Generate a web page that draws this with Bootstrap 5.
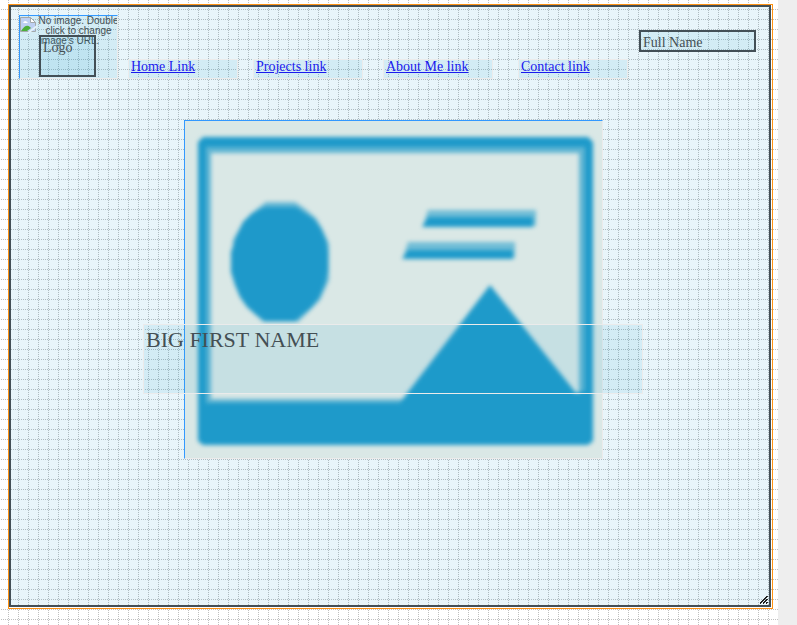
<!DOCTYPE html>
<html lang="en">
<head>
<meta charset="utf-8">
<meta name="viewport" content="width=device-width, initial-scale=1">
<title>Wireframe editor</title>
<link href="https://cdn.jsdelivr.net/npm/bootstrap@5.3.0/dist/css/bootstrap.min.css" rel="stylesheet">
<style>
body{background:#eee;font-family:"Liberation Serif",serif;font-size:14px;line-height:16px;color:#444f54}
.workspace{width:778px;height:625px;background:#fff}
/* free-form canvas: widgets carry their own coordinates */
.page-frame{left:8px;top:4px;width:765px;height:605px;border:1px solid #ff9212;padding:0 1px 1px 0}
.page-inner{border:2px solid #434f56;background:rgba(30,154,202,.1);background-clip:padding-box}
.grid-lines{pointer-events:none}
.widget{position:absolute;background:rgba(30,154,202,.1);background-clip:padding-box;border:1px solid #ebebeb;padding:0 2px;white-space:nowrap}
.widget a{color:#1a1aee;text-decoration:underline}
.nav-item-box{top:59px;height:20px;width:110px;line-height:14px}
.nav-home{left:128px}
.nav-projects{left:253px}
.nav-about{left:383px}
.nav-contact{left:518px}
.boxed{border:2px solid #434f56}
.missing{left:19px;top:15px;width:99px;height:64px;border-color:#39f #ebebeb #ebebeb #39f;font:10px/10px "Liberation Sans",sans-serif;overflow:hidden;text-align:center;padding:0}
.missing svg{float:left}
.missing-text{margin-right:-2px}
.logo{left:39px;top:35px;width:57px;height:42px;line-height:21px}
.fullname{left:639px;top:30px;width:117px;height:22px;line-height:21px}
.picture{left:184px;top:120px;width:419px;height:339px;border-color:#39f #ebebeb #ebebeb #39f;background:#dae8e6;padding:0}
.bigname{left:143px;top:324px;width:500px;height:70px;font-size:22px;line-height:30px}
.resizer{left:759px;top:595px}
</style>
</head>
<body class="m-0 overflow-hidden">
<main class="workspace position-relative overflow-hidden">
  <svg class="grid-lines position-absolute top-0 start-0" width="778" height="625" shape-rendering="crispEdges">
    <defs><pattern id="dots" x="8" y="9" width="10" height="10" patternUnits="userSpaceOnUse">
      <path fill="#bfbfbf" d="M1 0h1v1H1zM3 0h1v1H3zM5 0h1v1H5zM7 0h1v1H7zM9 0h1v1H9zM0 1h1v1H0zM0 3h1v1H0zM0 5h1v1H0zM0 7h1v1H0zM0 9h1v1H0z"/>
    </pattern></defs>
    <rect width="778" height="625" fill="url(#dots)"/>
  </svg>
  <div class="page-frame position-absolute"><div class="page-inner w-100 h-100"></div></div>
  <section class="widget missing">
    <svg width="18" height="18" viewBox="0 0 18 18"><path fill="#bdd0f2" stroke="#a3a9ab" d="M.5 1.5h10l5 5v9h-15z"/><path fill="#fff" stroke="#a3a9ab" d="M10.5 1.5v5h5z"/><path fill="#fff" d="M3 7q2-4 5 0z"/><path fill="#4caf3a" d="M1 15q5-8 9-4l1 1-4 3z"/><path stroke="#e4f2f9" stroke-width="2" d="M8 17l9-7"/></svg>
    <div class="missing-text">No image. Double<br>click to change<br>image's URL.</div>
  </section>
  <div class="widget boxed logo">Logo</div>
  <nav>
    <div class="widget nav-item-box nav-home"><a href="#">Home Link</a></div>
    <div class="widget nav-item-box nav-projects"><a href="#">Projects link</a></div>
    <div class="widget nav-item-box nav-about"><a href="#">About Me link</a></div>
    <div class="widget nav-item-box nav-contact"><a href="#">Contact link</a></div>
  </nav>
  <div class="widget boxed fullname">Full Name</div>
  <figure class="widget picture m-0">
    <svg class="d-block" width="417" height="337" viewBox="185 121 417 337" fill="#1e9aca">
      <defs><filter id="soft" x="-10%" y="-20%" width="120%" height="140%" color-interpolation-filters="sRGB"><feGaussianBlur stdDeviation="2.1"/></filter></defs>
      <g filter="url(#soft)">
        <path fill-rule="evenodd" d="M203 137H588L593 142V441L588 445H203L198 441V142zM206 147V403H585V147z"/>
        <path fill-rule="evenodd" opacity=".65" d="M203 143H588V403H203zM211 153V399H579V153z"/>
        <path d="M265 207H296L305 213L314 219L321 229L326 240L328 252V270L325 284L319 298L311 308L302 315L295 321H265L256 315L247 307L240 297L235 285L231 272V252L236 237L243 222L252 213Z"/>
        <path opacity=".6" d="M266 202H295L304 208L316 218L322 228L329 244V280L320 300L298 322H263L244 302L233 277V240L244 221L258 208z"/>
        <path opacity=".55" d="M428 210H536V226H423zM408 242H515V258H403z"/>
        <path d="M428 217H533V227H422zM408 250H513V259H402z"/>
        <path d="M490 285L576 393L588 390V420H390L402 400z"/>
      </g>
    </svg>
  </figure>
  <div class="widget bigname">BIG FIRST NAME</div>
  <svg class="resizer position-absolute" width="9" height="9" shape-rendering="crispEdges"><path stroke="#222" stroke-width="1.4" d="M1 8.5L8.500 1M4 8.500L8.500 4M7 8.500L8.500 7"/></svg>
</main>
<script src="https://cdn.jsdelivr.net/npm/bootstrap@5.3.0/dist/js/bootstrap.bundle.min.js"></script>
</body>
</html>
